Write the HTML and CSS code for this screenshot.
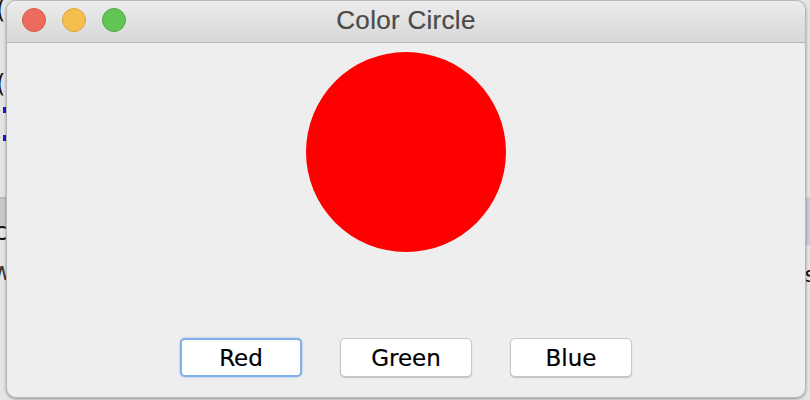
FILE: index.html
```html
<!DOCTYPE html>
<html>
<head>
<meta charset="utf-8">
<link rel="stylesheet" href="styles.css">
</head>
<body>
<div class="backdrop">
  <span class="frag frag-paren">(</span>
  <span class="frag frag-paren2">(</span>
  <span class="frag frag-blue1"></span>
  <span class="frag frag-blue2"></span>
  <span class="frag frag-band-left"></span>
  <span class="frag frag-c">c</span>
  <span class="frag frag-w">w</span>
  <span class="frag frag-band-right"></span>
  <span class="frag frag-s">s</span>
</div>
<div class="window">
  <div class="titlebar">
    <div class="lights">
      <span class="light red"></span>
      <span class="light yellow"></span>
      <span class="light green"></span>
    </div>
    <div class="title">Color Circle</div>
  </div>
  <div class="content">
    <div class="canvas">
      <div class="circle"></div>
    </div>
    <div class="buttons">
      <button class="btn btn-focus">Red</button>
      <button class="btn btn-wide">Green</button>
      <button class="btn">Blue</button>
    </div>
  </div>
</div>
</body>
</html>
```
FILE: styles.css
```css
html, body {
  margin: 0;
  padding: 0;
  width: 810px;
  height: 400px;
  overflow: hidden;
}
body {
  background: #dcdcdc;
  position: relative;
  font-family: "DejaVu Sans", "Liberation Sans", sans-serif;
}
.backdrop {
  position: absolute;
  inset: 0;
  background: #e4e4e4;
}
.frag {
  position: absolute;
  display: block;
}
.frag-paren {
  left: -4px;
  top: -4px;
  font-size: 24px;
  color: #111;
}
.frag-paren2 {
  left: -4px;
  top: 70px;
  font-size: 24px;
  color: #111;
}
.frag-blue1 {
  left: 3px;
  top: 107px;
  width: 4px;
  height: 6px;
  background: #1b1bd8;
}
.frag-blue2 {
  left: 3px;
  top: 135px;
  width: 4px;
  height: 6px;
  background: #1b1bd8;
}
.frag-band-left {
  left: 0;
  top: 197px;
  width: 8px;
  height: 28px;
  background: #c9c9cc;
  border-top: 2px solid #bdbdbd;
}
.frag-c {
  left: -6px;
  top: 218px;
  font-size: 24px;
  color: #111;
}
.frag-w {
  left: -8px;
  top: 258px;
  font-size: 24px;
  color: #333;
}
.frag-band-right {
  right: 0;
  top: 197px;
  width: 8px;
  height: 48px;
  background: #c8ccd6;
}
.frag-s {
  right: -6px;
  top: 262px;
  font-size: 22px;
  color: #111;
}
.window {
  position: absolute;
  left: 6px;
  top: 0;
  width: 800px;
  height: 398px;
  box-sizing: border-box;
  border: 1px solid #b8b8b8;
  border-radius: 10px;
  background: #eeeeee;
  overflow: hidden;
  display: flex;
  flex-direction: column;
  box-shadow: 0 1px 3px rgba(0,0,0,0.35);
}
.titlebar {
  height: 41px;
  flex: none;
  background: linear-gradient(#ececec, #d8d8d8);
  border-bottom: 1px solid #b4b4b4;
  position: relative;
  display: flex;
  align-items: center;
  justify-content: center;
}
.lights {
  position: absolute;
  left: 15px;
  top: 7px;
  display: flex;
  gap: 16px;
}
.light {
  width: 24px;
  height: 24px;
  border-radius: 50%;
  box-sizing: border-box;
}
.light.red {
  background: #ed6a5e;
  border: 1px solid #d8584c;
}
.light.yellow {
  background: #f5bf4f;
  border: 1px solid #dba43c;
}
.light.green {
  background: #61c554;
  border: 1px solid #4eac41;
}
.title {
  font-family: "Liberation Sans", "DejaVu Sans", sans-serif;
  font-size: 26px;
  color: #4a4a4a;
  letter-spacing: 0.3px;
  margin-top: -2px;
  -webkit-text-stroke: 0.2px #4a4a4a;
}
.content {
  flex: 1;
  display: flex;
  flex-direction: column;
  align-items: center;
}
.canvas {
  padding-top: 9px;
}
.circle {
  width: 200px;
  height: 200px;
  border-radius: 50%;
  background: #ff0000;
}
.buttons {
  margin-top: auto;
  margin-bottom: 20px;
  display: flex;
  gap: 38px;
}
.btn {
  width: 122px;
  height: 39px;
  box-sizing: border-box;
  background: #ffffff;
  border: 1px solid #c6c6c6;
  border-radius: 5px;
  box-shadow: 0 1px 1px rgba(0,0,0,0.2);
  font-family: "DejaVu Sans", "Liberation Sans", sans-serif;
  font-size: 23px;
  color: #000;
  -webkit-text-stroke: 0.2px #000;
  padding: 0;
  margin: 0;
}
.btn-wide {
  width: 132px;
}
.btn-focus {
  border: 2px solid #80b1ec;
  box-shadow: 0 0 2px rgba(70,130,220,0.6);
}
```
